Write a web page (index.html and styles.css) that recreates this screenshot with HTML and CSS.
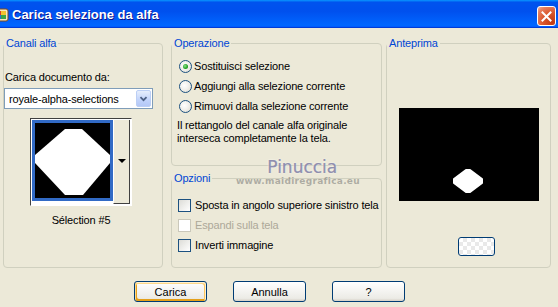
FILE: index.html
```html
<!DOCTYPE html>
<html lang="it">
<head>
  <meta charset="UTF-8">
  <meta name="viewport" content="width=device-width, initial-scale=1.0">
  <title>Carica selezione da alfa</title>
  <link rel="stylesheet" href="styles.css">
</head>
<body>
  <div class="window">
    <div class="titlebar">
      <span class="app-icon">
        <svg width="16" height="16" viewBox="0 0 16 16">
          <rect x="1" y="2" width="14" height="12" rx="2" fill="#f4e7c2" stroke="#7a4a1c"/>
          <path d="M3 4 L8 4 L8 8 L3 8 Z" fill="#d63a2a"/>
          <path d="M8 4 L13 4 L13 8 L8 8 Z" fill="#f2c230"/>
          <path d="M3 8 L8 8 L8 12 L3 12 Z" fill="#2c6fd6"/>
          <path d="M8 8 L13 8 L13 12 L8 12 Z" fill="#3aa548"/>
        </svg>
      </span>
      <span class="title">Carica selezione da alfa</span>
      <button class="close" type="button" aria-label="Chiudi">
        <svg width="11" height="11" viewBox="0 0 11 11">
          <path d="M1.5 1.5 L9.5 9.5 M9.5 1.5 L1.5 9.5" stroke="#fff" stroke-width="2" stroke-linecap="square"/>
        </svg>
      </button>
    </div>

    <div class="content">
      <div class="panels">
        <fieldset class="group channels">
          <legend>Canali alfa</legend>
          <div class="field-label">Carica documento da:</div>
          <div class="combo">
            <span class="combo-value">royale-alpha-selections</span>
            <span class="combo-btn">
              <svg width="15" height="19" viewBox="0 0 15 19">
                <path d="M4 8 L7.5 11.5 L11 8" fill="none" stroke="#4d6185" stroke-width="2"/>
              </svg>
            </span>
          </div>
          <div class="thumb-picker">
            <div class="thumb">
              <svg width="75" height="75" viewBox="0 0 75 75">
                <polygon points="30,6 47,6 75,32 75,40 48,72 30,72 0,40 0,32" fill="#fff"/>
              </svg>
            </div>
            <div class="thumb-drop">
              <svg width="8" height="5" viewBox="0 0 8 5">
                <polygon points="0,0 8,0 4,4" fill="#000"/>
              </svg>
            </div>
          </div>
          <div class="thumb-caption">Sélection #5</div>
        </fieldset>

        <div class="middle">
          <fieldset class="group operation">
            <legend>Operazione</legend>
            <div class="options">
              <label class="option"><span class="radio checked"></span>Sostituisci selezione</label>
              <label class="option"><span class="radio"></span>Aggiungi alla selezione corrente</label>
              <label class="option"><span class="radio"></span>Rimuovi dalla selezione corrente</label>
            </div>
            <p class="note">Il rettangolo del canale alfa originale<br>interseca completamente la tela.</p>
          </fieldset>

          <fieldset class="group settings">
            <legend>Opzioni</legend>
            <div class="checks">
              <label class="option"><span class="check"></span>Sposta in angolo superiore sinistro tela</label>
              <label class="option disabled"><span class="check"></span>Espandi sulla tela</label>
              <label class="option"><span class="check"></span>Inverti immagine</label>
            </div>
          </fieldset>
        </div>

        <fieldset class="group preview">
          <legend>Anteprima</legend>
          <div class="preview-box">
            <svg width="140" height="93" viewBox="0 0 140 93">
              <polygon points="67,62 71,62 83,71 83,75 71,84 67,84 55,75 55,71" fill="#fff" stroke="#fff" stroke-width="2" stroke-linejoin="round"/>
            </svg>
          </div>
          <button class="swatch" type="button" aria-label="Sfondo"></button>
        </fieldset>
      </div>

      <div class="actions">
        <button class="btn default" type="button">Carica</button>
        <button class="btn" type="button">Annulla</button>
        <button class="btn" type="button">?</button>
      </div>

      <!-- author stamp over the dialog -->
      <div class="stamp">
        <div class="stamp-name">Pinuccia</div>
        <div class="stamp-site">www.maidiregrafica.eu</div>
      </div>
    </div>
  </div>
</body>
</html>
```

FILE: styles.css
```css
body {
  margin: 0;
  padding: 0;
  background-color: #ece9d8;
  font-family: "Liberation Sans", Arial, sans-serif;
  font-size: 11px;
  letter-spacing: -0.15px;
  color: #000;
  overflow: hidden;
}
.window {
  width: 558px;
  height: 307px;
  background-color: #ece9d8;
}

/* title bar */
.titlebar {
  height: 28px;
  display: flex;
  align-items: center;
  background: linear-gradient(to bottom, #0997ff 0%, #0053ee 8%, #0050ee 40%, #0066ff 88%, #0066ff 93%, #005bff 95%, #003dd7 96%, #003dd7 100%);
  box-sizing: border-box;
  padding-right: 2px;
}
.app-icon {
  display: flex;
  margin-left: -7px;
  margin-top: 1px;
}
.title {
  margin-left: 3px;
  color: #fff;
  font-size: 13px;
  font-weight: bold;
  letter-spacing: 0;
  text-shadow: 1px 1px #0f1089;
  flex: 1;
}
.close {
  width: 19px;
  height: 20px;
  padding: 0;
  border: 1px solid #fff;
  border-radius: 3px;
  background: radial-gradient(circle at 85% 85%, #c13a12 0%, #d9552b 45%, #e7805f 80%, #f3b39c 100%);
  display: flex;
  align-items: center;
  justify-content: center;
  margin-top: 4px;
}

/* content */
.content {
  position: relative;
}
.panels {
  display: flex;
  padding: 9px 0 0 3px;
  height: 231px;
}
.group {
  margin: 0;
  padding: 0;
  min-width: 0;
  border: 1px solid #d0d0bf;
  border-radius: 4px;
  box-sizing: border-box;
}
.group legend {
  padding: 0 2px;
  margin-left: 0;
  color: #0046d5;
  line-height: 13px;
}
.channels {
  width: 160px;
  height: 231px;
}
.middle {
  width: 211px;
  margin-left: 8px;
  display: flex;
  flex-direction: column;
}
.operation {
  height: 129px;
}
.settings {
  height: 96px;
  margin-top: 6px;
}
.preview {
  width: 165px;
  height: 231px;
  margin-left: 4px;
}

/* alpha channels */
.field-label {
  margin: 21px 0 0 1px;
  line-height: 13px;
}
.combo {
  margin: 4px 0 0 0;
  width: 149px;
  height: 21px;
  box-sizing: border-box;
  border: 1px solid #7f9db9;
  background-color: #fff;
  display: flex;
  align-items: center;
  justify-content: space-between;
  padding: 0 1px 0 4px;
}
.combo-btn {
  width: 15px;
  height: 17px;
  display: flex;
  align-items: center;
  justify-content: center;
  border: 1px solid #bccff5;
  border-radius: 2px;
  background: linear-gradient(to bottom, #e6eefc, #c1d3fb 60%, #b4c8f6);
  box-sizing: border-box;
}
.combo-btn svg {
  margin-top: -1px;
}
.thumb-picker {
  margin: 9px 0 0 26px;
  width: 102px;
  height: 88px;
  box-sizing: border-box;
  padding: 1px;
  background-color: #fff;
  border: 1px solid;
  border-color: #404040 #fff #fff #404040;
  display: flex;
}
.thumb {
  width: 81px;
  height: 81px;
  box-sizing: border-box;
  border: 3px solid #316ac5;
  background-color: #000;
  align-self: flex-start;
}
.thumb svg {
  display: block;
}
.thumb-drop {
  flex: 1;
  background-color: #ece9d8;
  border-left: 1px solid #fff;
  border-right: 1px solid #404040;
  border-bottom: 1px solid #404040;
  display: flex;
  align-items: center;
  justify-content: center;
}
.thumb-caption {
  margin: 8px 0 0 26px;
  width: 102px;
  text-align: center;
  line-height: 13px;
}

/* radio & checkbox rows */
.options {
  margin-top: 6px;
  padding-left: 7px;
}
.checks {
  margin-top: 10px;
  padding-left: 6px;
}
.option {
  display: flex;
  align-items: center;
  height: 20px;
  gap: 2px;
  white-space: nowrap;
}
.checks .option {
  gap: 4px;
}
.radio {
  width: 13px;
  height: 13px;
  box-sizing: border-box;
  border: 1px solid #1c5180;
  border-radius: 50%;
  background: radial-gradient(circle at 40% 40%, #fff 0%, #f3f2ee 40%, #dcd9cd 100%);
  display: flex;
  align-items: center;
  justify-content: center;
}
.radio.checked::after {
  content: "";
  width: 5px;
  height: 5px;
  border-radius: 50%;
  background: radial-gradient(circle at 40% 40%, #8ce28c, #21a121 60%, #1a8a1a);
}
.check {
  width: 13px;
  height: 13px;
  box-sizing: border-box;
  border: 1px solid #1c5180;
  background: linear-gradient(135deg, #dcdcd7, #fff);
}
.option.disabled {
  color: #aca899;
}
.option.disabled .check {
  border-color: #cac8bb;
  background: #fff;
}
.note {
  margin: 3px 0 0 5px;
  line-height: 13px;
}

/* preview */
.preview-box {
  margin: 58px 0 0 12px;
  width: 140px;
  height: 93px;
  background-color: #000;
}
.preview-box svg {
  display: block;
}
.swatch {
  display: block;
  margin: 36px 0 0 71px;
  width: 37px;
  height: 19px;
  padding: 0;
  border: 1px solid #003c74;
  border-radius: 3px;
  background-color: #fff;
  background-image: repeating-conic-gradient(#e9e9e9 0 25%, #fff 0 50%);
  background-size: 8px 8px;
}

/* dialog buttons */
.actions {
  display: flex;
  gap: 26px;
  padding-left: 134px;
  margin-top: 13px;
}
.btn {
  width: 73px;
  height: 21px;
  padding: 0;
  border: 1px solid #003c74;
  border-radius: 3px;
  background: linear-gradient(to bottom, #fff, #ecebe6 86%, #d6d0c5);
  font-family: "Liberation Sans", Arial, sans-serif;
  font-size: 11px;
  color: #000;
}
.btn.default {
  box-shadow: inset -1px 1px #fff0cf, inset 1px 2px #fdd889, inset -2px 2px #fbc761, inset 2px -2px #e5a01a;
}

/* stamp */
.stamp {
  position: absolute;
  left: 236px;
  top: 130px;
  width: 112px;
  pointer-events: none;
  letter-spacing: 0;
}
.stamp-name {
  margin-left: 31px;
  font-family: "DejaVu Sans", sans-serif;
  font-size: 17px;
  line-height: 18px;
  color: rgba(128, 128, 165, 0.7);
  text-shadow: 0.5px 0 rgba(128, 128, 165, 0.6), 0 0 2px rgba(255, 255, 255, 0.9);
}
.stamp-site {
  margin-top: 0;
  font-family: "DejaVu Sans", sans-serif;
  font-weight: bold;
  font-size: 9px;
  line-height: 10px;
  letter-spacing: 0.3px;
  color: rgba(110, 110, 110, 0.5);
}
```
